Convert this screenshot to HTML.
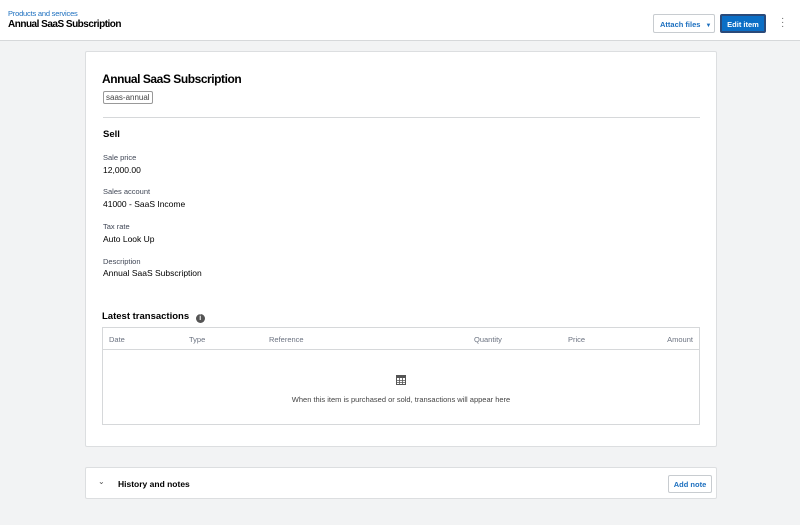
<!DOCTYPE html>
<html><head><style>
*{box-sizing:border-box;margin:0;padding:0}
body{width:800px;height:525px;background:#f2f3f4;font-family:"Liberation Sans",sans-serif;color:#000;position:relative;overflow:hidden}
.hdr{position:absolute;left:0;top:0;width:800px;height:41px;background:#fff;border-bottom:1px solid #d6d8da}
.a{position:absolute;white-space:nowrap}
.card{position:absolute;background:#fff;border:1px solid #dcdee0;border-radius:2px}
.lbl{font-size:7.5px;color:#404756}
.val{font-size:8.5px;color:#000}
.th{font-size:7.5px;color:#6b7280}
</style></head><body>
<div class="hdr">
<div class="a" style="left:8px;top:9px;font-size:7.5px;color:#1c6fbf;letter-spacing:-0.2px">Products and services</div>
<div class="a" style="left:8px;top:19px;font-size:10px;font-weight:bold;letter-spacing:-0.5px">Annual SaaS Subscription</div>
<div class="a" style="left:653px;top:14px;width:62px;height:19px;border:1px solid #c8ccd0;border-radius:2px;font-size:7.5px;font-weight:bold;color:#1c6fbf;padding:5px 0 0 6px">Attach files <span style="font-size:6px;margin-left:3px">▼</span></div>
<div class="a" style="left:720px;top:14px;width:46px;height:19px;background:#0b6fc6;border:2px solid #2a4a7a;border-radius:2px;font-size:7.5px;font-weight:bold;color:#fff;text-align:center;padding-top:4px">Edit item</div>
<div class="a" style="left:781px;top:17px;font-size:10px;color:#666;line-height:4px">·<br>·<br>·</div>
</div>
<div class="card" style="left:85px;top:51px;width:632px;height:396px">
<div class="a" style="left:16px;top:20px;font-size:12px;font-weight:bold;letter-spacing:-0.45px">Annual SaaS Subscription</div>
<div class="a" style="left:17px;top:39px;height:13px;border:1px solid #999;border-radius:2px;font-size:8px;color:#444;padding:1px 2px">saas-annual</div>
<div class="a" style="left:17px;top:65px;width:597px;border-top:1px solid #d6d8da"></div>
<div class="a" style="left:17px;top:77px;font-size:9.5px;font-weight:bold">Sell</div>
<div class="a lbl" style="left:17px;top:101px">Sale price</div>
<div class="a val" style="left:17px;top:113px">12,000.00</div>
<div class="a lbl" style="left:17px;top:135px">Sales account</div>
<div class="a val" style="left:17px;top:147px">41000 - SaaS Income</div>
<div class="a lbl" style="left:17px;top:170px">Tax rate</div>
<div class="a val" style="left:17px;top:182px">Auto Look Up</div>
<div class="a lbl" style="left:17px;top:205px">Description</div>
<div class="a val" style="left:17px;top:216px">Annual SaaS Subscription</div>
<div class="a" style="left:16px;top:259px;font-size:9.5px;font-weight:bold">Latest transactions <span style="display:inline-block;width:9px;height:9px;border-radius:50%;background:#555;color:#fff;font-size:7px;text-align:center;line-height:9px;margin-left:4px;vertical-align:-1px">i</span></div>
<div class="a" style="left:16px;top:275px;width:598px;height:98px;border:1px solid #d6d8da">
<div style="height:22px;border-bottom:1px solid #d6d8da;position:relative">
<span class="a th" style="left:6px;top:7px">Date</span>
<span class="a th" style="left:86px;top:7px">Type</span>
<span class="a th" style="left:166px;top:7px">Reference</span>
<span class="a th" style="left:371px;top:7px">Quantity</span>
<span class="a th" style="left:465px;top:7px">Price</span>
<span class="a th" style="right:6px;top:7px">Amount</span>
</div>
<svg class="a" style="left:293px;top:47px" width="10" height="10" viewBox="0 0 10 10"><rect x="0.5" y="0.5" width="9" height="9" fill="none" stroke="#555"/><rect x="0.5" y="0.5" width="9" height="2.5" fill="#555"/><path d="M3.5 3v7M6.5 3v7M0 5.5h10M0 7.5h10" stroke="#555" stroke-width=".8"/></svg>
<div class="a" style="left:0;width:596px;text-align:center;top:67px;font-size:7.5px;color:#444">When this item is purchased or sold, transactions will appear here</div>
</div>
</div>
<div class="card" style="left:85px;top:467px;width:632px;height:32px">
<div class="a" style="left:12px;top:9px;font-size:8px;color:#555">⌄</div>
<div class="a" style="left:32px;top:11px;font-size:8.5px;font-weight:bold">History and notes</div>
<div class="a" style="left:582px;top:7px;width:44px;height:18px;border:1px solid #c8ccd0;border-radius:2px;font-size:7.5px;font-weight:bold;color:#1c6fbf;text-align:center;padding-top:4px">Add note</div>
</div>
</body></html>
